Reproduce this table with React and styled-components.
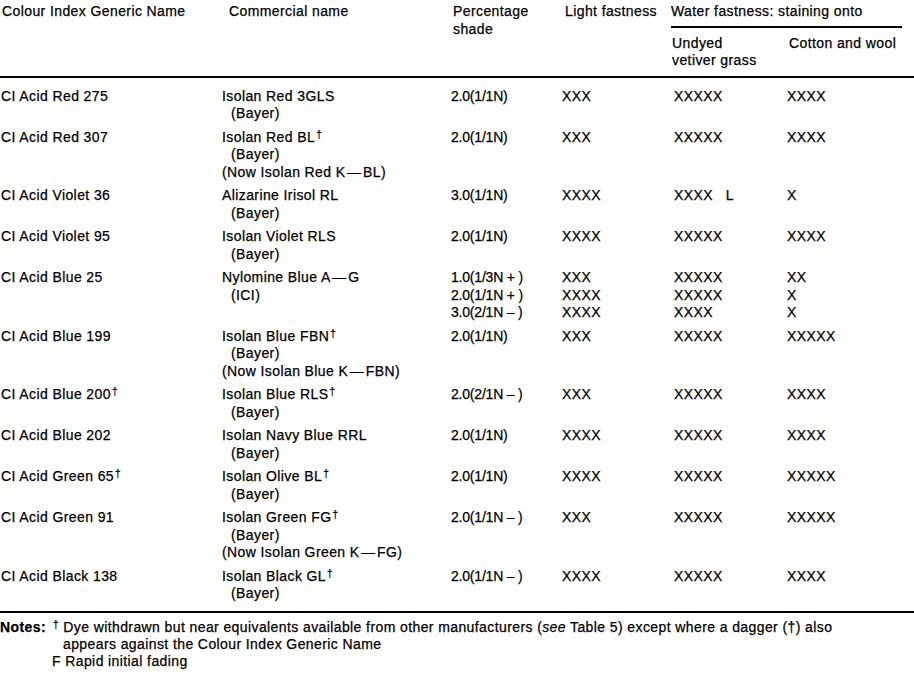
import styled, { createGlobalStyle } from "styled-components";

const GlobalStyle = createGlobalStyle`
  body {
    margin: 0;
    background: #fff;
    color: #000;
    font-family: "Liberation Sans", Arial, Helvetica, sans-serif;
    font-size: 14px;
    letter-spacing: 0.4px;
    -webkit-text-stroke: 0.25px #000;
  }
`;

const COLS = "222px 229px 111px 112px 113px 1fr";

const Sheet = styled.div`
  width: 914px;
  line-height: 17.5px;
`;

const HeaderGrid = styled.div`
  display: grid;
  grid-template-columns: ${COLS};
  padding: 3px 0 6px;
`;

const HeadCell = styled.div`
  padding-left: ${(p) => p.$indent || 0}px;
`;

const GroupHead = styled.div`
  grid-column: 5 / 7;
  margin-left: -3px;
`;

const GroupRule = styled.div`
  width: 231px;
  height: 2px;
  background: #000;
  margin: 5px 0 7px;
`;

const SubHeads = styled.div`
  display: grid;
  grid-template-columns: 117px 1fr;
  padding-left: 1px;
`;

const Rule = styled.div`
  width: 914px;
  height: 2px;
  background: #000;
`;

const Body = styled.div`
  padding: 10px 0 2px;
`;

const Row = styled.div`
  display: grid;
  grid-template-columns: ${COLS};
  padding-bottom: 6px;
`;

const Cell = styled.div`
  display: flex;
  flex-direction: column;
  padding-left: ${(p) => p.$indent || 0}px;
  letter-spacing: ${(p) => (p.$tight ? "-0.2px" : "inherit")};
`;

const Line = styled.span`
  white-space: nowrap;
  padding-left: ${(p) => (p.$sub ? 9 : 0)}px;
`;

const Dagger = styled.span`
  font-size: 10px;
  vertical-align: 4px;
  line-height: 0;
  margin-left: 1px;
`;

const Notes = styled.div`
  padding-top: 6px;
  line-height: 17px;
`;

const NoteRow = styled.div`
  display: flex;
`;

const NoteLabel = styled.span`
  font-weight: bold;
  width: 52px;
  flex: none;
`;

const NoteBody = styled.div`
  display: flex;
  flex-direction: column;
`;

const NoteLine = styled.span`
  white-space: nowrap;
  padding-left: ${(p) => p.$indent || 0}px;
`;

const rows = [
  { name: "CI Acid Red 275", com: ["Isolan Red 3GLS", "(Bayer)"], pct: ["2.0(1/1N)"], light: ["XXX"], undyed: ["XXXXX"], cotton: ["XXXX"] },
  { name: "CI Acid Red 307", com: ["Isolan Red BL†", "(Bayer)", "(Now Isolan Red K\u200a\u2014\u200aBL)"], pct: ["2.0(1/1N)"], light: ["XXX"], undyed: ["XXXXX"], cotton: ["XXXX"] },
  { name: "CI Acid Violet 36", com: ["Alizarine Irisol RL", "(Bayer)"], pct: ["3.0(1/1N)"], light: ["XXXX"], undyed: ["XXXX\u00a0\u00a0\u00a0L"], cotton: ["X"] },
  { name: "CI Acid Violet 95", com: ["Isolan Violet RLS", "(Bayer)"], pct: ["2.0(1/1N)"], light: ["XXXX"], undyed: ["XXXXX"], cotton: ["XXXX"] },
  { name: "CI Acid Blue 25", com: ["Nylomine Blue A\u200a\u2014\u200aG", "(ICI)"], pct: ["1.0(1/3N + )", "2.0(1/1N + )", "3.0(2/1N \u2013 )"], light: ["XXX", "XXXX", "XXXX"], undyed: ["XXXXX", "XXXXX", "XXXX"], cotton: ["XX", "X", "X"] },
  { name: "CI Acid Blue 199", com: ["Isolan Blue FBN†", "(Bayer)", "(Now Isolan Blue K\u200a\u2014\u200aFBN)"], pct: ["2.0(1/1N)"], light: ["XXX"], undyed: ["XXXXX"], cotton: ["XXXXX"] },
  { name: "CI Acid Blue 200†", com: ["Isolan Blue RLS†", "(Bayer)"], pct: ["2.0(2/1N \u2013 )"], light: ["XXX"], undyed: ["XXXXX"], cotton: ["XXXX"] },
  { name: "CI Acid Blue 202", com: ["Isolan Navy Blue RRL", "(Bayer)"], pct: ["2.0(1/1N)"], light: ["XXXX"], undyed: ["XXXXX"], cotton: ["XXXX"] },
  { name: "CI Acid Green 65†", com: ["Isolan Olive BL†", "(Bayer)"], pct: ["2.0(1/1N)"], light: ["XXXX"], undyed: ["XXXXX"], cotton: ["XXXXX"] },
  { name: "CI Acid Green 91", com: ["Isolan Green FG†", "(Bayer)", "(Now Isolan Green K\u200a\u2014\u200aFG)"], pct: ["2.0(1/1N \u2013 )"], light: ["XXX"], undyed: ["XXXXX"], cotton: ["XXXXX"] },
  { name: "CI Acid Black 138", com: ["Isolan Black GL†", "(Bayer)"], pct: ["2.0(1/1N \u2013 )"], light: ["XXXX"], undyed: ["XXXXX"], cotton: ["XXXX"] },
];

// splits a trailing dagger off so it can sit raised
const withDagger = (text) =>
  text.endsWith("†") ? (
    <>
      {text.slice(0, -1)}
      <Dagger>†</Dagger>
    </>
  ) : (
    text
  );

const Lines = ({ items, subAfterFirst }) =>
  items.map((t, i) => (
    <Line key={i} $sub={subAfterFirst && i === 1}>
      {withDagger(t)}
    </Line>
  ));

const App = () => (
  <>
    <GlobalStyle />
    <Sheet>
      <HeaderGrid>
        <HeadCell $indent={2}>Colour Index Generic Name</HeadCell>
        <HeadCell $indent={7}>Commercial name</HeadCell>
        <HeadCell $indent={2}>
          Percentage
          <br />
          shade
        </HeadCell>
        <HeadCell $indent={3}>Light fastness</HeadCell>
        <GroupHead>
          Water fastness: staining onto
          <GroupRule />
          <SubHeads>
            <span>
              Undyed
              <br />
              vetiver grass
            </span>
            <span>Cotton and wool</span>
          </SubHeads>
        </GroupHead>
      </HeaderGrid>
      <Rule />
      <Body>
        {rows.map((r) => (
          <Row key={r.name}>
            <Cell $indent={1}>
              <Line>{withDagger(r.name)}</Line>
            </Cell>
            <Cell>
              <Lines items={r.com} subAfterFirst />
            </Cell>
            <Cell $tight>
              <Lines items={r.pct} />
            </Cell>
            <Cell>
              <Lines items={r.light} />
            </Cell>
            <Cell>
              <Lines items={r.undyed} />
            </Cell>
            <Cell>
              <Lines items={r.cotton} />
            </Cell>
          </Row>
        ))}
      </Body>
      <Rule />
      <Notes>
        <NoteRow>
          <NoteLabel>Notes:</NoteLabel>
          <NoteBody>
            <NoteLine>
              <Dagger>†</Dagger> Dye withdrawn but near equivalents available from other manufacturers (<i>see</i> Table 5) except where a dagger (†) also
            </NoteLine>
            <NoteLine $indent={11}>appears against the Colour Index Generic Name</NoteLine>
            <NoteLine $indent={-2}>F Rapid initial fading</NoteLine>
          </NoteBody>
        </NoteRow>
      </Notes>
    </Sheet>
  </>
);

export default App;
